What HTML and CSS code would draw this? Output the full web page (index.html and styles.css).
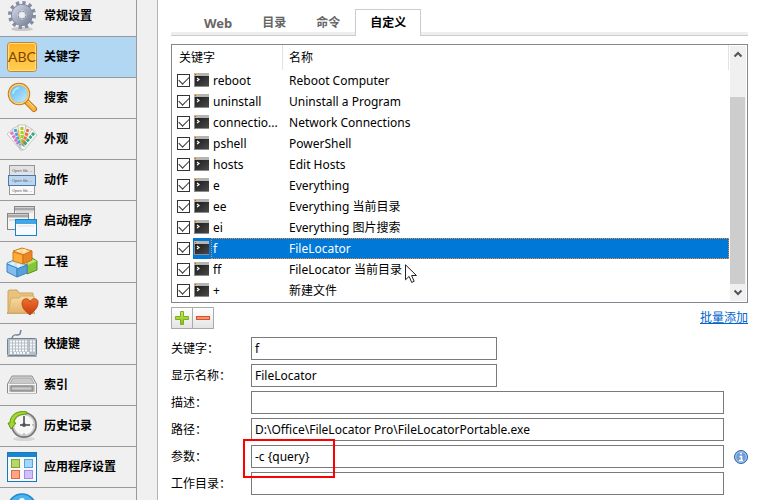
FILE: index.html
```html
<!DOCTYPE html>
<html lang="zh-CN">
<head>
<meta charset="utf-8">
<title>自定义关键字</title>
<link rel="stylesheet" href="styles.css">
</head>
<body>
<svg class="defs" aria-hidden="true">
  <defs>
    <linearGradient id="steel" x1="0" y1="0" x2="1" y2="1"><stop offset="0" stop-color="#c9cfe0"/><stop offset="1" stop-color="#7f879c"/></linearGradient>
    <linearGradient id="amber" x1="0" y1="0" x2="0" y2="1"><stop offset="0" stop-color="#fdb022"/><stop offset="1" stop-color="#ffd052"/></linearGradient>
    <linearGradient id="lens" x1="0" y1="0" x2="1" y2="1"><stop offset="0" stop-color="#4db4ee"/><stop offset="1" stop-color="#cdeeff"/></linearGradient>
    <linearGradient id="folder" x1="0" y1="0" x2="0" y2="1"><stop offset="0" stop-color="#f7dca6"/><stop offset="1" stop-color="#e2b66c"/></linearGradient>
    <linearGradient id="heart" x1="0" y1="0" x2="0" y2="1"><stop offset="0" stop-color="#ee7030"/><stop offset="1" stop-color="#c83c0c"/></linearGradient>
    <linearGradient id="dark" x1="0" y1="0" x2="1" y2="1"><stop offset="0" stop-color="#1c1c1c"/><stop offset="1" stop-color="#4a4a4a"/></linearGradient>
    <linearGradient id="green" x1="0" y1="0" x2="0" y2="1"><stop offset="0" stop-color="#cbe95b"/><stop offset="1" stop-color="#86bd16"/></linearGradient>
    <symbol id="term" viewBox="0 0 15 14">
      <rect width="15" height="14" fill="#8c8c8c"/>
      <rect x="0" y="0" width="15" height="3" fill="#b4b4b4"/>
      <rect x="1" y="1" width="1" height="1" fill="#e23c1e"/><rect x="3" y="1" width="1" height="1" fill="#ffc400"/><rect x="1" y="0" width="3" height="1" fill="#e9b060"/>
      <rect x="1" y="3" width="14" height="10" fill="url(#dark)"/>
      <path d="M3 5l2 1.500-2 1.500" fill="none" stroke="#fff" stroke-width="1.200"/>
    </symbol>
  </defs>
</svg>
<div class="window">
  <nav class="sidebar">
    <ul>
      <li><a href="#general">
        <svg viewBox="0 0 30 30"><ellipse cx="15" cy="28" rx="11" ry="2" fill="#c8c8c8"/><circle cx="15" cy="14" r="12" fill="none" stroke="#858da3" stroke-width="4" stroke-dasharray="3.200 3.083"/><circle cx="15" cy="14" r="8" fill="none" stroke="#808799" stroke-width="6"/><circle cx="15" cy="14" r="7.500" fill="none" stroke="url(#steel)" stroke-width="5.500"/><circle cx="15" cy="14" r="4" fill="none" stroke="#8990a3"/><circle cx="15" cy="14" r="3" fill="#efefef" stroke="#dce1ed"/></svg>
        <span>常规设置</span></a></li>
      <li class="current"><a href="#keywords">
        <svg viewBox="0 0 30 30"><rect x=".5" y=".5" width="29" height="29" rx="3" fill="url(#amber)" stroke="#ca822f"/><rect x="1.500" y="1.500" width="27" height="27" rx="2" fill="none" stroke="#ffe08a"/><text x="15" y="20" class="abc">ABC</text></svg>
        <span>关键字</span></a></li>
      <li><a href="#search">
        <svg viewBox="0 0 30 30"><path d="M20 19l7 7" stroke="#b66c1c" stroke-width="6" stroke-linecap="round"/><path d="M20 19l7 7" stroke="#f9b83c" stroke-width="4" stroke-linecap="round"/><path d="M21 18l6 6" stroke="#ffe294" stroke-linecap="round"/><circle cx="12" cy="11" r="10" fill="url(#lens)" stroke="#c37a26" stroke-width="2.500"/><circle cx="12" cy="11" r="9.500" fill="none" stroke="#ffd376" stroke-width="1.500"/><path d="M6 11a6 6 0 0 1 6-6" fill="none" stroke="#b4e4ff" stroke-width="2"/></svg>
        <span>搜索</span></a></li>
      <li><a href="#look">
        <svg viewBox="0 0 30 30"><g stroke="#aaa" stroke-width=".6" fill="#f8f8f8"><path d="M0 10l6-5 9 17-4 1z"/><path d="M5 5l6-3 5 22h-4z"/><path d="M11 1h8l-3 25h-3z"/><path d="M19 2l6 3-9 21-3-2z"/><path d="M25 5l5 6-13 15-4-2z"/></g><g stroke-width="3" fill="none" stroke-dasharray="3 1"><path d="M4 8l7 12" stroke="#df75c6"/><path d="M8 5l5 16" stroke="#4aa0e0"/><path d="M15 3v17" stroke="#a6cf16"/><path d="M21 5l-5 16" stroke="#ee7040"/><path d="M27 9L16 22" stroke="#35a87d"/></g><path d="M11 6l2 9" stroke="#efc328" stroke-width="2" stroke-dasharray="3 1"/></svg>
        <span>外观</span></a></li>
      <li><a href="#actions">
        <svg viewBox="0 0 30 30"><rect x="2.500" y=".5" width="25" height="10" fill="#e2e2e2" stroke="#969696"/><rect x="2.500" y="20.500" width="25" height="9" fill="#fafafa" stroke="#969696"/><rect x="1.500" y="10.500" width="27" height="10" fill="#bcd6ef" stroke="#4b78ae"/><g class="tiny"><text x="5" y="7">Open file ...</text><text x="5" y="17">Open file ...</text><text x="5" y="27">Open file ...</text></g></svg>
        <span>动作</span></a></li>
      <li><a href="#startup">
        <svg viewBox="0 0 30 30"><g fill="#f5f5f5" stroke="#858585"><rect x="7.500" y=".5" width="20" height="16"/></g><path d="M8 3h19" stroke="#a8a8a8" stroke-width="3"/><path d="M9 6h17" stroke="#ddd" stroke-width="2"/><rect x=".5" y="7.500" width="21" height="16" fill="#f5f5f5" stroke="#858585"/><path d="M1 10h20" stroke="#a8a8a8" stroke-width="3"/><path d="M2 14h18" stroke="#ddd" stroke-width="2"/><rect x="8.500" y="13.500" width="21" height="16" fill="#f7fbff" stroke="#1683c6"/><path d="M9 16h20" stroke="#42a7e7" stroke-width="4"/><path d="M11 20h16" stroke="#ddd"/></svg>
        <span>启动程序</span></a></li>
      <li><a href="#projects">
        <svg viewBox="0 0 30 30"><path d="M20 14l5-3 5 3v9l-10 4z" fill="#86c53b" stroke="#4e9421"/><path d="M20 15l5-3 5 2-9 4z" fill="#bae66c"/><path d="M0 16l7-3 13 5-9 4-11-5z" fill="#c4e8fc" stroke="#468ec5"/><path d="M0 17l10 4v9L0 25z" fill="#83bdf0" stroke="#3d82c1"/><path d="M10 22l10-4v8l-10 4z" fill="#599fda" stroke="#3d82c1"/><path d="M6 4l9-3 10 3-8 4z" fill="#ffd48a" stroke="#d8791a"/><path d="M6 5l10 3v9L6 14z" fill="#ffad39" stroke="#d8791a"/><path d="M16 8l9-4v9l-9 4z" fill="#e98726" stroke="#d07016"/><path d="M10 3v2h3V3zm6-1v3h3V2zM4 16v2h3v-2zm6 1v3h3v-3z" fill="#fff" opacity=".5"/></svg>
        <span>工程</span></a></li>
      <li><a href="#menu">
        <svg viewBox="0 0 30 30"><path d="M0 25h28" stroke="#aaa" stroke-width="2"/><path d="M1 25V3l1-1h8l2 3h14v20z" fill="#e8c27e" stroke="#cfa45c"/><path d="M1 25L4 10h8l2-2h13v17z" fill="url(#folder)" stroke="#d5ac66"/><path d="M23 27C18 23 15 20 15 15c0-5 7-6 8-1 2-5 9-4 8 1 0 5-4 8-8 12z" fill="url(#heart)" stroke="#b23c14" stroke-width=".8"/></svg>
        <span>菜单</span></a></li>
      <li><a href="#hotkeys">
        <svg viewBox="0 0 30 30"><path d="M5 9c2-6 5-1 8-4l1-4" fill="none" stroke="#778595" stroke-width="1.500"/><rect x=".5" y="9.500" width="29" height="17" rx="1" fill="#b5bfc8" stroke="#728292"/><path d="M0 27.500h30" stroke="#aaa"/><path d="M3 12.500h18M3 15.500h18M3 18.500h18M3 21.500h18" stroke="#f8fafc" stroke-width="2" stroke-dasharray="2 1"/><path d="M3 24h3m1 0h11m2 0h2M23 12.500h5m-5 3h5m-5 3h5m-5 3h5" stroke="#f5f7fa" stroke-width="2" stroke-dasharray="2 1"/></svg>
        <span>快捷键</span></a></li>
      <li><a href="#index">
        <svg viewBox="0 0 30 30"><path d="M5 6h20l4.500 8v9H.5v-9z" fill="#ddd" stroke="#8c8c8c"/><path d="M6 8h18l3 6H3z" fill="#c9c9c9" stroke="#aaa"/><rect x="1.500" y="14.500" width="27" height="8" fill="#c6c6c6" stroke="#f5f5f5"/><path d="M4 16h22v5H4z" fill="#aaa" stroke="#858585"/><path d="M5 18.500h19" stroke="#cacaca" stroke-width="2"/></svg>
        <span>索引</span></a></li>
      <li><a href="#history">
        <svg viewBox="0 0 30 30"><ellipse cx="17" cy="28" rx="11" ry="2" fill="#d5d5d5"/><circle cx="17" cy="14" r="12" fill="#fff" stroke="#777" stroke-width="2"/><circle cx="17" cy="14" r="10.500" fill="#f7f7f7" stroke="#cacaca" stroke-width="1.500"/><path d="M17 5v10m-4-1h10" fill="none" stroke="#444" stroke-width="1.500"/><circle cx="17" cy="14" r="2" fill="#555"/><path d="M17 22v2m8-10h2" stroke="#999"/><path d="M20 1C10-1 3 4 3 12H1l3 6 5-6H7C7 6 12 3 20 3z" fill="#a4d72a" stroke="#5b9712"/></svg>
        <span>历史记录</span></a></li>
      <li><a href="#apps">
        <svg viewBox="0 0 30 30"><rect x=".5" y=".5" width="29" height="29" fill="#f5faff" stroke="#1978b8"/><path d="M1 3h28" stroke="#1687d0" stroke-width="4"/><rect x="4.500" y="7.500" width="8" height="8" fill="#b8d56a" stroke="#80a52c"/><rect x="17.500" y="7.500" width="8" height="8" fill="#a5d7fb" stroke="#57a4dc"/><rect x="4.500" y="18.500" width="8" height="8" fill="#fca685" stroke="#e1683f"/><rect x="17.500" y="18.500" width="8" height="8" fill="#d2c0fa" stroke="#a98ddd"/></svg>
        <span>应用程序设置</span></a></li>
      <li><a href="#about">
        <svg viewBox="0 0 30 30"><circle cx="15" cy="15" r="14" fill="#4bb3f4" stroke="#2287cd" stroke-width="1.500"/><circle cx="15" cy="8" r="3" fill="#fff"/><path d="M12 13h5v11" fill="none" stroke="#fff" stroke-width="4"/></svg>
        </a></li>
    </ul>
  </nav>
  <main class="panel">
    <div class="tabs" role="tablist">
      <button type="button" role="tab" class="tab latin">Web</button>
      <button type="button" role="tab" class="tab">目录</button>
      <button type="button" role="tab" class="tab">命令</button>
      <button type="button" role="tab" class="tab active" aria-selected="true">自定义</button>
    </div>
    <div class="list">
      <table>
        <colgroup><col class="c-check"><col class="c-key"><col></colgroup>
        <thead><tr><th colspan="2">关键字</th><th>名称</th></tr></thead>
        <tbody>
          <tr><td><input type="checkbox" checked aria-labelledby="k1"></td><td id="k1"><svg><use href="#term"/></svg>reboot</td><td>Reboot Computer</td></tr>
          <tr><td><input type="checkbox" checked aria-labelledby="k2"></td><td id="k2"><svg><use href="#term"/></svg>uninstall</td><td>Uninstall a Program</td></tr>
          <tr><td><input type="checkbox" checked aria-labelledby="k3"></td><td id="k3"><svg><use href="#term"/></svg>connectio...</td><td>Network Connections</td></tr>
          <tr><td><input type="checkbox" checked aria-labelledby="k4"></td><td id="k4"><svg><use href="#term"/></svg>pshell</td><td>PowerShell</td></tr>
          <tr><td><input type="checkbox" checked aria-labelledby="k5"></td><td id="k5"><svg><use href="#term"/></svg>hosts</td><td>Edit Hosts</td></tr>
          <tr><td><input type="checkbox" checked aria-labelledby="k6"></td><td id="k6"><svg><use href="#term"/></svg>e</td><td>Everything</td></tr>
          <tr><td><input type="checkbox" checked aria-labelledby="k7"></td><td id="k7"><svg><use href="#term"/></svg>ee</td><td>Everything 当前目录</td></tr>
          <tr><td><input type="checkbox" checked aria-labelledby="k8"></td><td id="k8"><svg><use href="#term"/></svg>ei</td><td>Everything 图片搜索</td></tr>
          <tr class="selected"><td><input type="checkbox" checked aria-labelledby="k9"></td><td id="k9"><svg><use href="#term"/></svg>f</td><td>FileLocator</td></tr>
          <tr><td><input type="checkbox" checked aria-labelledby="k10"></td><td id="k10"><svg><use href="#term"/></svg>ff</td><td><span class="pointed">FileLocator 当前目录<svg class="pointer" viewBox="0 0 12 20"><path d="M.5.8v15l3.600-3.400 2.600 6 2.500-1.100-2.600-5.800h4.900z" fill="#fff" stroke="#222"/></svg></span></td></tr>
          <tr><td><input type="checkbox" checked aria-labelledby="k11"></td><td id="k11"><svg><use href="#term"/></svg>+</td><td>新建文件</td></tr>
        </tbody>
      </table>
      <div class="scrollbar" aria-hidden="true">
        <svg viewBox="0 0 16 17"><path d="M4.500 10.500l3.500-3.500 3.500 3.500" fill="none" stroke="#555" stroke-width="2"/></svg>
        <div class="track"><div class="thumb"></div></div>
        <svg viewBox="0 0 16 17"><path d="M4.500 6.500l3.500 3.500 3.500-3.500" fill="none" stroke="#555" stroke-width="2"/></svg>
      </div>
    </div>
    <div class="actions">
      <div class="buttons">
        <button type="button" aria-label="添加"><svg viewBox="0 0 14 14"><path d="M5.500.5h3v5h5v3h-5v5h-3v-5h-5v-3h5z" fill="url(#green)" stroke="#7bb01d"/></svg></button>
        <button type="button" aria-label="删除"><svg viewBox="0 0 14 14"><rect x=".5" y="5.500" width="13" height="3" fill="#f4936f" stroke="#d45135"/></svg></button>
      </div>
      <a href="#batch">批量添加</a>
    </div>
    <form class="form">
      <div class="row"><label for="keyword">关键字：</label><input type="text" id="keyword" class="short" value="f"></div>
      <div class="row"><label for="title">显示名称：</label><input type="text" id="title" class="short" value="FileLocator"></div>
      <div class="row"><label for="desc">描述：</label><input type="text" id="desc"></div>
      <div class="row"><label for="path">路径：</label><input type="text" id="path" value="D:\Office\FileLocator Pro\FileLocatorPortable.exe"></div>
      <div class="row"><label for="args">参数：</label><input type="text" id="args" value="-c {query}"><svg class="info" viewBox="0 0 14 14"><circle cx="7" cy="7" r="6.500" fill="#6f9fd6" stroke="#2f64aa"/><circle cx="7" cy="7" r="5.300" fill="none" stroke="#a8c8ed"/><path d="M6 3.500h2M5.500 6.500H7.500V10M5 10.500h4" fill="none" stroke="#fff" stroke-width="1.600"/></svg><span class="mark"></span></div>
      <div class="row"><label for="cwd">工作目录：</label><input type="text" id="cwd"></div>
    </form>
  </main>
</div>
</body>
</html>
```
FILE: styles.css
```css
* { box-sizing: border-box; }

body {
  margin: 0;
  background: #f0f0f0;
  color: #000;
  font: 12px/20px "Noto Sans", "Noto Sans CJK SC", sans-serif;
}

svg { display: block; flex: none; }
button, input { font: inherit; color: inherit; margin: 0; }

.defs { position: absolute; width: 0; height: 0; }

.window {
  display: flex;
  height: 100vh;
  overflow: hidden;
}

/* Category list, scrolled slightly past its top */
.sidebar {
  flex: none;
  width: 137px;
  border-right: 1px solid #999;
}
.sidebar ul {
  list-style: none;
  margin: -4px 0 0;
  padding: 0;
}
.sidebar a {
  display: flex;
  align-items: center;
  gap: 7px;
  height: 41px;
  padding-left: 7px;
  border-bottom: 1px solid #999;
  color: #000;
  font-weight: 700;
  text-decoration: none;
}
.sidebar .current a { background: #b2d7f3; }
.sidebar svg { width: 30px; height: 30px; overflow: visible; }
.abc { font: 14px Lato, sans-serif; fill: #804500; text-anchor: middle; }
.tiny { font: 4px "Liberation Sans", sans-serif; fill: #555; }

.panel {
  flex: 1;
  min-width: 0;
  margin-left: 20px;
  padding: 9px 12px 0 13px;
  border-left: 1px solid #b4b4b4;
  background: #fff;
}

.tabs {
  display: flex;
  height: 27px;
  padding-left: 18px;
  border-bottom: 1px solid #ccc;
  background: linear-gradient(#fff 23px, #eee 23px);
}
.tab {
  height: 27px;
  padding: 0 15px;
  border: 0;
  background: none;
  color: #666;
  font-weight: 700;
}
.tab.active {
  padding: 0 14px;
  border: 1px solid #ccc;
  border-bottom: 0;
  background: #fff;
  color: #000;
}
.latin { font-size: 13px; }

.list {
  display: flex;
  margin-top: 8px;
  padding: 0 1px 1px 0;
  border: 1px solid #828790;
}
table {
  flex: 1;
  width: 100%;
  min-width: 0;
  table-layout: fixed;
  border-collapse: separate;
  border-spacing: 0;
}
.c-check { width: 21px; }
.c-key { width: 90px; }
th {
  height: 25px;
  padding: 0 7px;
  border-right: 1px solid #e2e2e2;
  font-weight: 400;
  text-align: left;
}
th + th { padding-left: 6px; }
td {
  height: 21px;
  padding: 0 0 0 6px;
  white-space: nowrap;
}
td:first-child { padding-left: 5px; }
td:nth-child(2) { padding-left: 20px; position: relative; }
td > svg {
  position: absolute;
  left: 1px;
  top: 3px;
  width: 15px;
  height: 14px;
}
td > input { display: block; }

input[type="checkbox"] {
  appearance: none;
  width: 13px;
  height: 13px;
  border: 1px solid #333;
  background: #fff;
}
input[type="checkbox"]:checked::before {
  content: "";
  display: block;
  width: 9px;
  height: 5px;
  margin: 2px 1px;
  border: solid #333;
  border-width: 0 0 1px 1px;
  transform: translateY(-1px) rotate(-45deg);
}

.selected { position: relative; color: #fff; }
.selected td + td { background: #0078d7; }
.selected td:last-child::after {
  content: "";
  position: absolute;
  inset: 0 0 0 39px;
  border: 1px dotted #ff8728;
}

.pointed { position: relative; }
.pointer {
  position: absolute;
  left: 100%;
  top: 3px;
  width: 12px;
  height: 20px;
  margin-left: 3px;
}

.scrollbar {
  display: flex;
  flex: none;
  flex-direction: column;
  width: 16px;
  margin: 1px 0 0 1px;
  background: #f0f0f0;
}
.scrollbar svg { width: 16px; height: 17px; }
.track { flex: 1; padding: 34px 1px 0 0; }
.thumb { height: 100%; background: #cdcdcd; }

.actions {
  display: flex;
  justify-content: space-between;
  align-items: center;
  margin-top: 4px;
}
.actions a { color: #0066cc; text-decoration: underline; }
.buttons { display: flex; }
.buttons button {
  display: grid;
  place-items: center;
  width: 22px;
  height: 22px;
  padding: 0;
  border: 1px solid #aaa;
  background: linear-gradient(#fff, #e4e4e4);
}
.buttons button + button { margin-left: -1px; }
.buttons svg { width: 14px; height: 14px; }

.form {
  display: grid;
  gap: 4px;
  margin-top: 8px;
}
.row {
  position: relative;
  display: grid;
  grid-template-columns: 80px 1fr 24px;
  align-items: center;
}
.row input {
  width: 100%;
  height: 23px;
  padding: 0 3px;
  border: 1px solid #7a7a7a;
  border-radius: 0;
  background: #fff;
}
.row .short { width: 52%; }
.info { width: 14px; height: 14px; justify-self: end; }

/* Highlight over the parameter field */
.mark {
  position: absolute;
  z-index: 1;
  left: 72px;
  top: -6px;
  width: 92px;
  height: 39px;
  border: 2px solid #f00;
}
```
